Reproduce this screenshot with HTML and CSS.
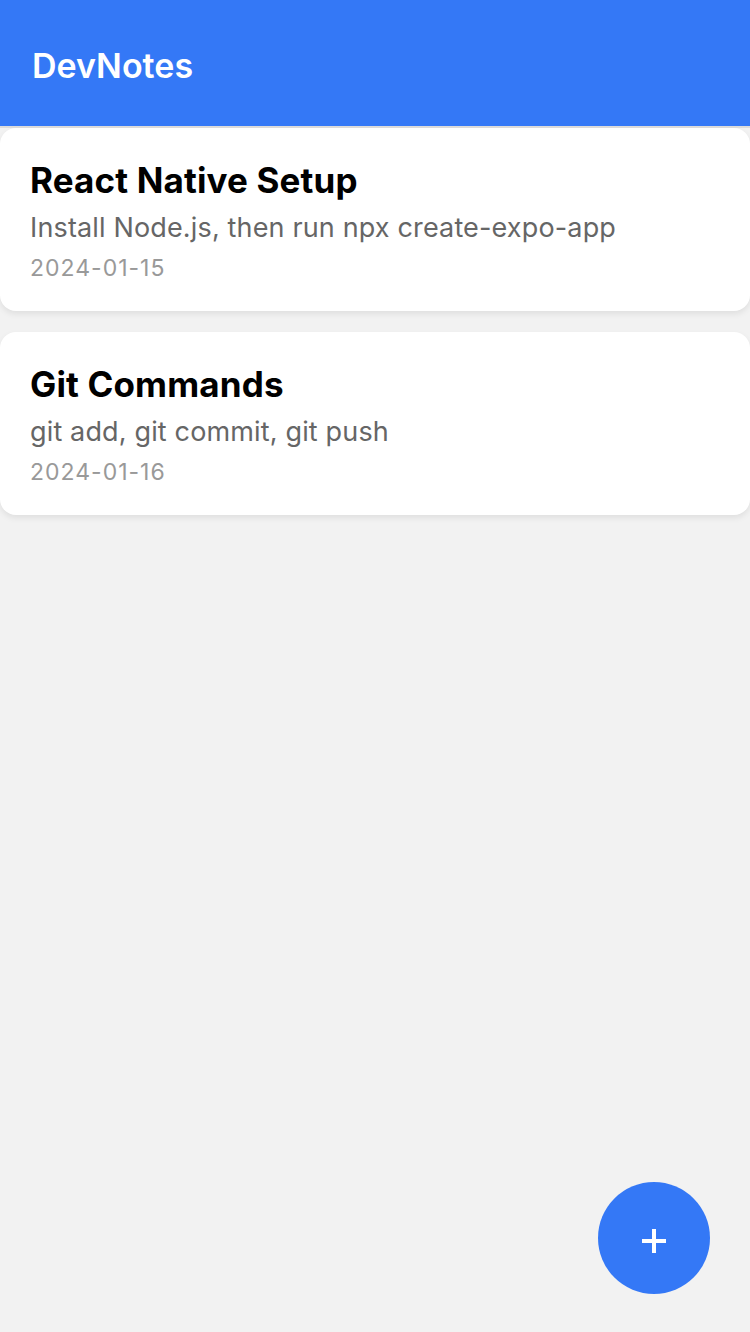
FILE: index.html
```html
<!DOCTYPE html>
<html>
<head>
<meta charset="utf-8">
<link rel="stylesheet" href="styles.css">
</head>
<body>
<div class="app">
  <header class="header"><h1 class="header-title">DevNotes</h1></header>
  <main class="list">
    <article class="card">
      <h2 class="card-title">React Native Setup</h2>
      <p class="card-body">Install Node.js, then run npx create-expo-app</p>
      <p class="card-date">2024-01-15</p>
    </article>
    <article class="card">
      <h2 class="card-title">Git Commands</h2>
      <p class="card-body">git add, git commit, git push</p>
      <p class="card-date">2024-01-16</p>
    </article>
  </main>
  <button class="fab" aria-label="Add note">
    <svg width="26" height="26" viewBox="0 0 26 26"><path d="M13 1v24M1 13h24" stroke="#fff" stroke-width="4" fill="none"/></svg>
  </button>
</div>
</body>
</html>
```
FILE: styles.css
```css
* { box-sizing: border-box; }
html, body { margin: 0; padding: 0; }
body {
  background: #f2f2f2;
  font-family: Inter, "Noto Sans", sans-serif;
  width: 750px;
  height: 1332px;
  overflow: hidden;
}
.app { position: relative; height: 1332px; }
.header {
  height: 128px;
  background: #3478f6;
  border-bottom: 2px solid #dcdcdc;
  display: flex;
  align-items: center;
  padding: 4px 32px 0;
}
.header-title {
  margin: 0;
  color: #fff;
  font-size: 34px;
  font-weight: 600;
}
.list {
  display: flex;
  flex-direction: column;
  gap: 21px;
}
.card {
  background: #fff;
  border-radius: 16px;
  padding: 30px 30px 28px;
  height: 183px;
  box-shadow: 0 3px 6px rgba(0,0,0,0.08);
}
.card-title {
  margin: 0;
  font-size: 35px;
  font-weight: 700;
  color: #000;
  line-height: 44px;
  letter-spacing: 0.15px;
}
.card-body {
  margin: 10px 0 0;
  font-size: 27px;
  color: #666;
  line-height: 32px;
  letter-spacing: 0.15px;
}
.card-date {
  margin: 10px 0 0;
  font-size: 23px;
  color: #999;
  line-height: 28px;
  letter-spacing: 1px;
}
.fab {
  position: absolute;
  right: 40px;
  bottom: 38px;
  width: 112px;
  height: 112px;
  border-radius: 50%;
  background: #3478f6;
  border: none;
  display: flex;
  align-items: center;
  justify-content: center;
  padding: 0;
  padding-top: 6px;
}
```
